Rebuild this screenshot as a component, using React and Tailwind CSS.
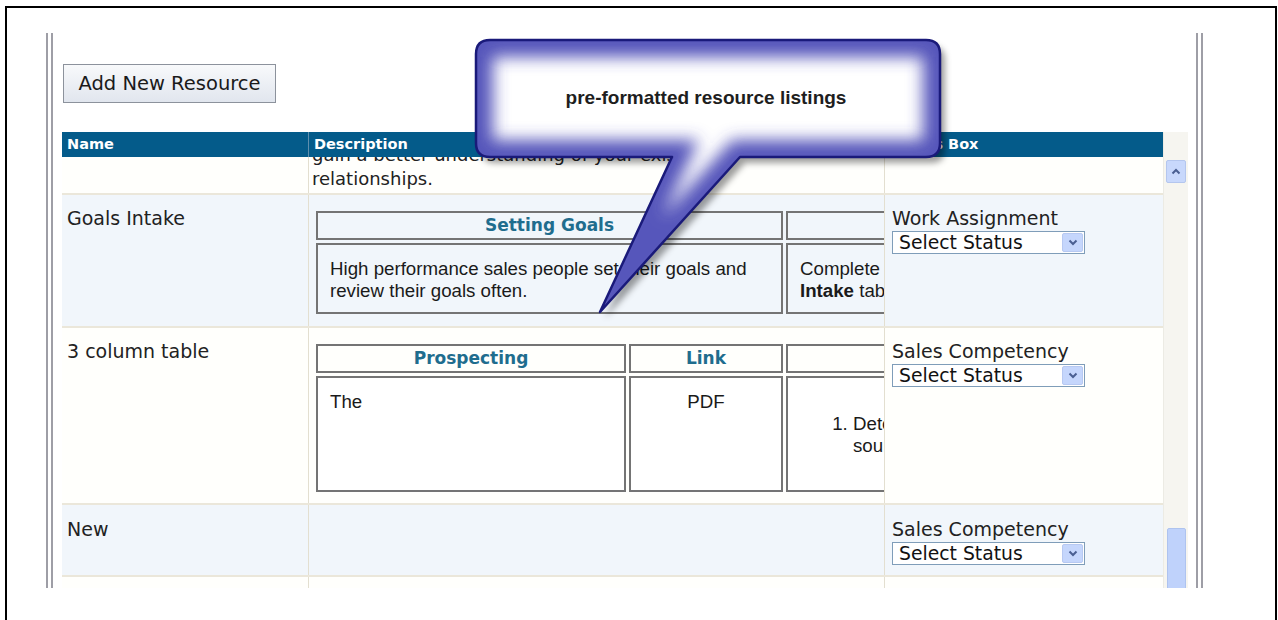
import React from "react";

const verdana = "font-['DejaVu_Sans',Verdana,sans-serif]";
const arial = "font-['Liberation_Sans',Arial,sans-serif]";

function Chevron({ up }) {
  return (
    <svg width="10" height="7" viewBox="0 0 10 7">
      <path
        d={up ? "M1.5 5.5 L5 2 L8.5 5.5" : "M1.5 1.5 L5 5 L8.5 1.5"}
        fill="none"
        stroke="#4a5f92"
        strokeWidth="2"
      />
    </svg>
  );
}

function StatusSelect() {
  return (
    <div className="mt-[3px] flex h-[23px] w-[193px] items-center border border-[#7f9db9] bg-white">
      <span className="flex-1 pl-[6px] text-[18.8px] leading-[20px] text-[#111]">Select Status</span>
      <div className="mr-[1px] flex h-[19px] w-[21px] items-center justify-center rounded-[2px] border border-[#b7c9f2] bg-[#c5d6fc]">
        <Chevron />
      </div>
    </div>
  );
}

function Status({ label }) {
  return (
    <div>
      <div className="text-[19px] leading-[20px] text-[#222]">{label}</div>
      <StatusSelect />
    </div>
  );
}

function Row({ name, status, tone, height, pt = "pt-[13px]", children }) {
  const bg = tone === "blue" ? "bg-[#f1f6fb]" : "bg-[#fffffc]";
  return (
    <div
      className={`grid shrink-0 grid-cols-[247px_576px_278px] border-b-2 border-[#ebe7da] ${bg}`}
      style={{ height }}
    >
      <div className={`border-r border-[#e3dfd0] pl-[5px] text-[19px] leading-[20px] text-[#222] ${pt}`}>
        {name}
      </div>
      <div className="overflow-hidden border-r border-[#e3dfd0]">{children}</div>
      <div className={`pl-[7px] ${pt}`}>{status && <Status label={status} />}</div>
    </div>
  );
}

function HeadCell({ children }) {
  return (
    <div className="flex items-center justify-center border-2 border-[#747474] text-[17px] font-bold text-[#1f6d8e]">
      {children}
    </div>
  );
}

function BodyCell({ className = "", children }) {
  return (
    <div className={`border-2 border-[#747474] px-3 pt-[13px] ${arial} text-[18.7px] leading-[22px] text-[#1a1a1a] ${className}`}>
      {children}
    </div>
  );
}

function Scrollbar() {
  return (
    <div className="flex w-[25px] flex-col items-center border-l border-[#ecebe4] bg-[#f6f5f0]">
      <div className="mt-[28px] flex h-[23px] w-[20px] items-center justify-center rounded-[2px] border border-[#b4c6ee] bg-[#c8d8fc]">
        <Chevron up />
      </div>
      <div className="flex-1" />
      <div className="mb-[-8px] h-[68px] w-[19px] rounded-t-[2px] border border-[#aec3ef] bg-[#bfd2fb]" />
    </div>
  );
}

function Callout() {
  const shape =
    "M20 6 H456 Q470 6 470 20 V109 Q470 123 456 123 H270 L130 278 L202 123 H20 Q6 123 6 109 V20 Q6 6 20 6 Z";
  return (
    <div className="pointer-events-none absolute left-[470px] top-[34px] h-[300px] w-[490px]">
      <svg width="490" height="300" viewBox="0 0 490 300" className="absolute inset-0">
        <defs>
          <clipPath id="bubble">
            <path d={shape} />
          </clipPath>
          <filter id="soft" x="-20%" y="-20%" width="140%" height="140%">
            <feGaussianBlur stdDeviation="8" />
          </filter>
          <filter id="shade" x="-20%" y="-20%" width="140%" height="140%">
            <feDropShadow dx="5" dy="6" stdDeviation="3" floodColor="#000" floodOpacity="0.38" />
          </filter>
        </defs>
        <path d={shape} fill="#fff" filter="url(#shade)" />
        <g clipPath="url(#bubble)">
          <path d={shape} fill="none" stroke="#4343b4" strokeOpacity="0.9" strokeWidth="34" filter="url(#soft)" />
        </g>
        <path d={shape} fill="none" stroke="#1a1a7a" strokeWidth="2.5" strokeLinejoin="round" />
      </svg>
      <div
        className={`absolute left-[6px] top-[6px] flex h-[117px] w-[464px] items-center justify-center pr-[4px] ${arial} text-[19px] font-bold text-[#1e1e1e]`}
      >
        pre-formatted resource listings
      </div>
    </div>
  );
}

export default function App() {
  return (
    <div className={`relative h-[620px] w-[1278px] overflow-hidden bg-white pl-[5px] pt-[6px] ${verdana}`}>
      <div className="h-full w-[1272px] border-l-2 border-r-2 border-t-2 border-black pl-[39px] pt-[25px]">
        <div className="h-[555px] w-[1157px] border-x-[7px] border-double border-[#9e9ea6] pl-[9px] pt-[31px]">
          <button className="ml-px h-[39px] w-[213px] border border-[#8c929c] bg-gradient-to-b from-[#f8f9fb] to-[#e1e6ee] text-[19.5px] text-[#1a1a1a]">
            Add New Resource
          </button>

          <div className="mt-[29px] flex h-[456px] w-[1126px] overflow-hidden">
            <div className="flex w-[1101px] flex-col">
              {/* column headers */}
              <div className="grid h-[25px] shrink-0 grid-cols-[247px_576px_278px] bg-[#045b8a] text-[14.5px] font-bold text-white">
                <div className="flex items-center border-r border-[#5f8fae] pl-[5px]">Name</div>
                <div className="flex items-center border-r border-[#5f8fae] pl-[5px]">Description</div>
                <div className="flex items-center pl-[5px]">Status Box</div>
              </div>

              {/* scrolled listing */}
              <div className="flex-1 overflow-hidden">
                <div className="-mt-[20px] flex flex-col">
                  <Row height={58}>
                    <div className="pl-[3px] pt-[6px] text-[18px] leading-[24px] text-[#222]">
                      gain a better understanding of your existing
                      <br />
                      relationships.
                    </div>
                  </Row>

                  <Row name="Goals Intake" status="Work Assignment" tone="blue" height={133}>
                    <div className="grid w-[675px] grid-cols-[467px_205px] grid-rows-[29px_71px] gap-[3px] pl-[7px] pt-[16px]">
                      <HeadCell>Setting Goals</HeadCell>
                      <HeadCell />
                      <BodyCell className="pt-[12px]">
                        High performance sales people set their goals and review their goals often.
                      </BodyCell>
                      <BodyCell className="pt-[12px]">
                        Complete the Goals
                        <br />
                        <b>Intake</b> tab.
                      </BodyCell>
                    </div>
                  </Row>

                  <Row name="3 column table" status="Sales Competency" height={177}>
                    <div className="grid w-[700px] grid-cols-[310px_154px_226px] grid-rows-[29px_116px] gap-[3px] pl-[7px] pt-[16px]">
                      <HeadCell>Prospecting</HeadCell>
                      <HeadCell>Link</HeadCell>
                      <HeadCell />
                      <BodyCell className="bg-white">The</BodyCell>
                      <BodyCell className="bg-white text-center">PDF</BodyCell>
                      <BodyCell className="bg-white px-0">
                        <ol className="mt-[22px] list-decimal pl-[53px]">
                          <li>
                            Determine your
                            <br />
                            sources
                          </li>
                        </ol>
                      </BodyCell>
                    </div>
                  </Row>

                  <Row name="New" status="Sales Competency" tone="blue" height={72} pt="pt-[14px]" />

                  <Row height={120} />
                </div>
              </div>
            </div>
            <Scrollbar />
          </div>
        </div>
      </div>
      <Callout />
    </div>
  );
}
